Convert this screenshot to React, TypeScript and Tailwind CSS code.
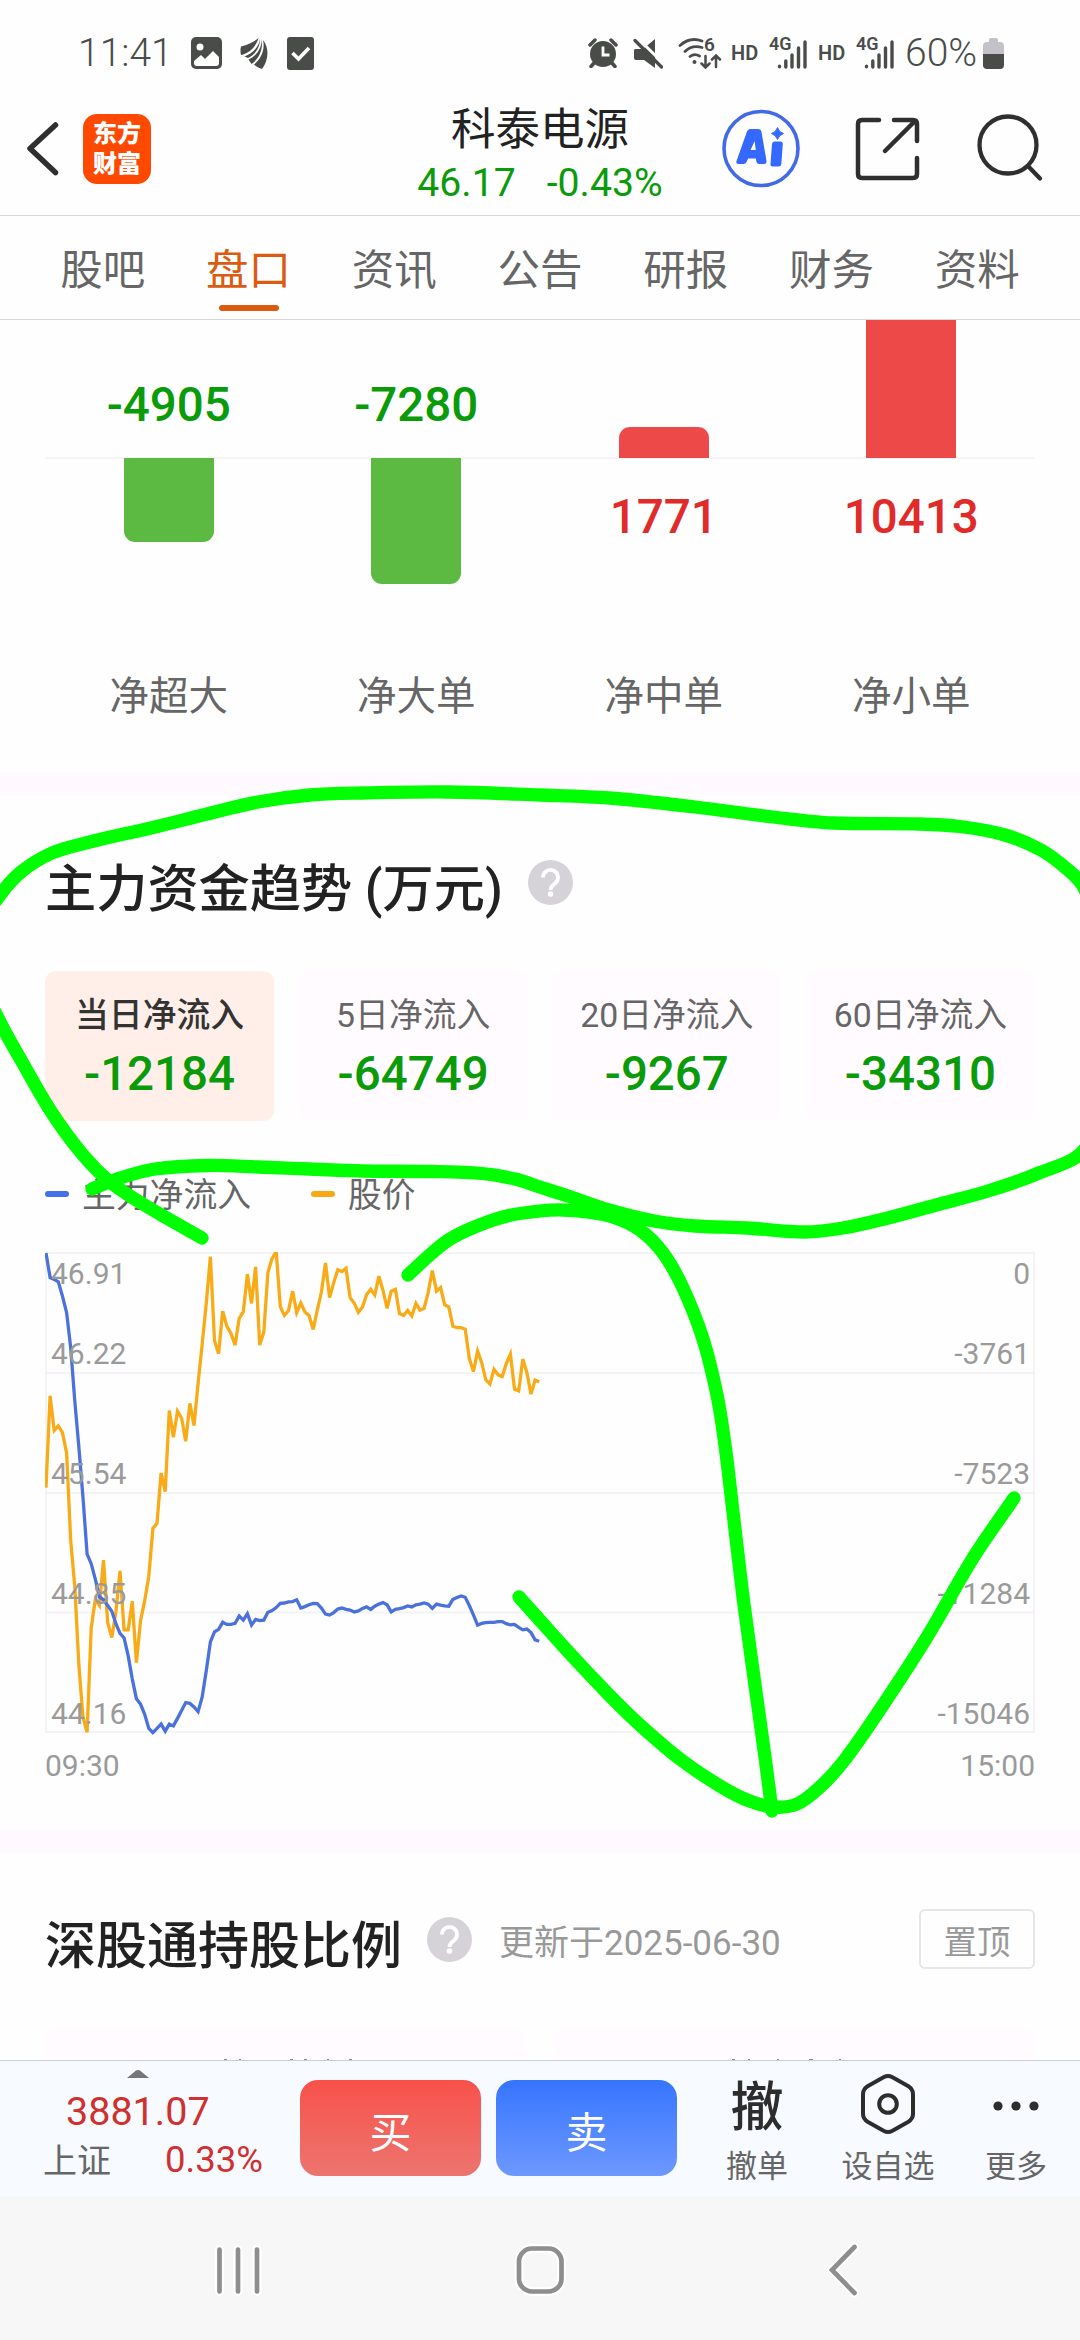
import React from "react";

type Point = [number, number];

const tabs = ["股吧", "盘口", "资讯", "公告", "研报", "财务", "资料"];

const orders = [
  { label: "净超大", value: -4905, height: 84 },
  { label: "净大单", value: -7280, height: 126 },
  { label: "净中单", value: 1771, height: 31 },
  { label: "净小单", value: 10413, height: 138 },
];

const flows = [
  { label: "当日净流入", value: "-12184" },
  { label: "5日净流入", value: "-64749" },
  { label: "20日净流入", value: "-9267" },
  { label: "60日净流入", value: "-34310" },
];

// One sample per trading minute, measured downwards from the chart's origin.
const price = [
  722, 465, 562, 549, 567, 625, 870, 1000, 1220, 1365, 1407, 1115, 1035, 1052, 925, 1100, 1142, 1070, 955, 1120,
  1120, 1040, 1212, 1095, 1040, 970, 836, 822, 681, 733, 506, 581, 508, 527, 592, 486, 548, 430, 320, 205,
  75, 310, 347, 228, 270, 290, 323, 248, 230, 124, 206, 104, 323, 287, 120, 80, 62, 215, 240, 226,
  172, 232, 205, 230, 240, 279, 225, 175, 93, 190, 148, 112, 117, 108, 190, 206, 231, 216, 182, 167,
  183, 130, 170, 220, 172, 167, 235, 240, 226, 241, 206, 225, 220, 175, 114, 172, 162, 210, 216, 270,
  274, 274, 278, 360, 397, 340, 372, 420, 432, 391, 406, 411, 375, 348, 446, 451, 362, 400, 460, 421, 426,
];

const inflow = [
  65, 134, 139, 146, 185, 232, 330, 480, 610, 750, 908, 935, 978, 1028, 1036, 1052, 1068, 1103, 1130, 1143,
  1193, 1258, 1313, 1328, 1356, 1396, 1408, 1396, 1384, 1404, 1384, 1389, 1368, 1346, 1324, 1326, 1336, 1349, 1308, 1234,
  1154, 1126, 1119, 1099, 1105, 1105, 1102, 1081, 1093, 1075, 1107, 1091, 1094, 1093, 1071, 1066, 1058, 1046, 1045, 1042,
  1041, 1036, 1059, 1055, 1050, 1046, 1047, 1059, 1076, 1079, 1072, 1062, 1059, 1063, 1065, 1070, 1067, 1060, 1056, 1063,
  1054, 1048, 1044, 1050, 1070, 1063, 1061, 1058, 1053, 1056, 1050, 1048, 1045, 1048, 1060, 1048, 1051, 1053, 1054, 1035,
  1030, 1025, 1029, 1052, 1078, 1107, 1102, 1100, 1099, 1099, 1097, 1097, 1103, 1106, 1105, 1113, 1120, 1118, 1128, 1148, 1152,
];

const toLine = (values: number[]) =>
  values.map((v, i) => `${(1 + i * 4.11).toFixed(1)},${((v - 65) / 2.8 + 1).toFixed(1)}`).join(" ");

const axis = [
  { left: "46.91", right: "0", y: 32 },
  { left: "46.22", right: "-3761", y: 112 },
  { left: "45.54", right: "-7523", y: 232 },
  { left: "44.85", right: "-11284", y: 352 },
  { left: "44.16", right: "-15046", y: 472 },
];

const loopStroke: Point[] = [
  [202, 1238], [165, 1217], [138, 1201], [110, 1182], [83, 1155], [52, 1113], [21, 1060], [0, 1022], [-18, 980], [-18, 925],
  [0, 895], [21, 872], [52, 853], [90, 842], [155, 827], [207, 814], [258, 802], [310, 795], [362, 793], [448, 792],
  [540, 795], [609, 798], [695, 807], [781, 818], [833, 823], [919, 824], [960, 826.5], [1005, 835], [1041, 850], [1067, 869],
  [1083, 886], [1110, 950], [1120, 1080], [1083, 1151], [1039, 1173], [988, 1191], [936, 1205], [884, 1219], [843, 1228], [805, 1232],
  [747, 1228], [695, 1226], [654, 1221], [609, 1210], [568, 1196], [540, 1187], [515, 1179], [482, 1173.500], [430, 1171.500], [362, 1171],
  [310, 1169], [258, 1167], [207, 1165.500], [155, 1169], [120, 1178], [92, 1189],
];

const fallStroke: Point[] = [
  [408, 1275], [432, 1253], [450, 1239], [477, 1226], [507, 1216], [540, 1211], [563, 1210], [587, 1212], [613, 1217], [640, 1230],
  [663, 1253], [683, 1288], [703, 1339], [717, 1395], [725, 1445], [733, 1512], [743, 1597], [755, 1685], [765, 1757], [772, 1811],
];

const reboundStroke: Point[] = [
  [519, 1597], [537, 1617], [563, 1646], [590, 1675], [615, 1701], [640, 1725], [680, 1759], [720, 1786], [747, 1800], [773, 1807],
  [797, 1804], [820, 1787], [843, 1762], [877, 1714], [927, 1637], [973, 1558], [1014, 1498],
];

// Cubic spline through the pen's points, with tangents weighted by segment length.
const smooth = (p: Point[]) => {
  const length = (i: number) => Math.hypot(p[i + 1][0] - p[i][0], p[i + 1][1] - p[i][1]);
  const tangent = (i: number): Point => {
    const a = Math.max(i - 1, 0);
    const b = Math.min(i + 1, p.length - 1);
    let run = 0;
    for (let k = a; k < b; k++) run += length(k);
    return [(p[b][0] - p[a][0]) / run, (p[b][1] - p[a][1]) / run];
  };
  let d = `M${p[0][0]} ${p[0][1]}`;
  for (let i = 0; i < p.length - 1; i++) {
    const s = length(i) / 3;
    const [ax, ay] = tangent(i);
    const [bx, by] = tangent(i + 1);
    const [nx, ny] = p[i + 1];
    d += `C${p[i][0] + ax * s} ${p[i][1] + ay * s} ${nx - bx * s} ${ny - by * s} ${nx} ${ny}`;
  }
  return d;
};

function Signal() {
  return (
    <div className="relative h-8 w-[38px]">
      <span className="absolute left-0 top-0 text-[18px] font-semibold leading-[14px]">4G</span>
      <svg className="absolute bottom-0 right-0" width="30" height="30" viewBox="0 0 30 30" stroke="currentColor" strokeWidth="3.4" strokeLinecap="round">
        <path d="M2.5 27.2v.6M8.8 22v6M15 16v12M21.5 9v19M28 3v25" />
      </svg>
    </div>
  );
}

function StatusBar() {
  return (
    <div className="flex h-[106px] items-center pl-[78px] pr-[76px] text-[#4a4c4a]">
      <span className="w-[113px] pt-px text-[39px] font-light leading-none">11:41</span>
      <svg width="31" height="32" viewBox="0 0 31 32">
        <rect width="31" height="32" rx="5" fill="currentColor" />
        <circle cx="9" cy="10" r="3.5" fill="#fff" />
        <path d="M3 24l7-6 4 4 8-8 6 6v6q0 3-3 3H6q-3 0-3-3z" fill="#fff" />
      </svg>
      <svg className="ml-[18px]" width="28" height="33" viewBox="0 0 28 33" fill="currentColor">
        <path d="M18.500 1C13 5.500 7 8 1 9.500q-1 4 0 8.500C9 16 16 10 18.500 1z" />
        <path d="M20 1.500c-1 9-8 15.500-15.500 18L8 21C15 17.500 20 11 20 1.500z" />
        <path d="M21.500 2C22 12 16 19 8.500 22.500l3 4.500C19 22 23.500 12 21.500 2z" />
        <path d="M23 3c2.500 10-2.500 19.500-9 24.500 1.500 1.500 4.500 3.500 8 4.500 6-8 8-20 1-29z" />
      </svg>
      <svg className="ml-[19px]" width="27" height="33" viewBox="0 0 27 33">
        <rect width="27" height="33" rx="3" fill="currentColor" />
        <path d="M5.500 16l6 6L22 11" fill="none" stroke="#fff" strokeWidth="3.600" />
      </svg>
      <div className="flex-1" />
      <svg width="30" height="30" viewBox="0 0 30 30" fill="none" stroke="currentColor">
        <circle cx="15" cy="16" r="13" fill="currentColor" stroke="none" />
        <path d="M2 7l5-5M28 7l-5-5" strokeWidth="3.500" strokeLinecap="round" />
        <path d="M6 25l-3 3.500M24 25l3 3.500" strokeWidth="3.500" strokeLinecap="round" />
        <path d="M15 8.500V17h6.500" stroke="#fff" strokeWidth="2.800" />
      </svg>
      <svg className="ml-[15px]" width="30" height="31" viewBox="0 0 30 31">
        <path d="M2 11h8L22 1v29L11 22H3q-2 0-2-2v-7q0-2 1-2z" fill="currentColor" />
        <path d="M3 -1.500L31 26" stroke="#fefefe" strokeWidth="3" />
        <path d="M2 2.500L28.500 29" stroke="currentColor" strokeWidth="3.200" strokeLinecap="round" />
      </svg>
      <div className="relative ml-[15px] h-8 w-[44px]">
        <svg width="44" height="32" viewBox="0 0 44 32" fill="none" stroke="currentColor" strokeWidth="2.800" strokeLinecap="round">
          <path d="M2 8.500Q12-.5 24 4M7 14.500Q14 7.500 24 10.500M12 19.500q4.500-3.500 9.500-.5" />
          <circle cx="16.500" cy="25" r="2" fill="currentColor" stroke="none" />
          <path d="M27.500 19v11M23.500 26.500l4 4 4-4M38 30V19M34 22.500l4-4 4 4" strokeWidth="2.500" />
        </svg>
        <span className="absolute left-[26px] top-0 text-[19px] font-semibold leading-4">6</span>
      </div>
      <span className="ml-[9px] w-[29px] text-[20px] font-semibold leading-none">HD</span>
      <div className="ml-[9px]"><Signal /></div>
      <span className="ml-[11px] w-[29px] text-[20px] font-semibold leading-none">HD</span>
      <div className="ml-[9px]"><Signal /></div>
      <span className="ml-[11px] w-[78px] pt-px text-[39px] font-light leading-none">60%</span>
      <svg width="21" height="31" viewBox="0 0 21 31">
        <path d="M6 4V2q0-2 2-2h5q2 0 2 2v2h2q4 0 4 4v10H0V8q0-4 4-4z" fill="#c4c1c8" />
        <path d="M0 16h21v11q0 4-4 4H4q-4 0-4-4z" fill="currentColor" />
      </svg>
    </div>
  );
}

function Header() {
  return (
    <header className="flex h-[110px] items-start border-b border-[#d6d6d6] text-[#2f2f2f]">
      <svg className="ml-[27px] mt-[15px]" width="32" height="56" viewBox="0 0 32 56" fill="none" stroke="currentColor" strokeWidth="5.500" strokeLinecap="round" strokeLinejoin="round">
        <path d="M28.500 4L3 27.500 28.500 51.500" />
      </svg>
      <div className="ml-6 mt-2 flex h-[70px] w-[68px] flex-col items-center justify-center rounded-[14px] bg-[#ff4800] text-[24px] font-black leading-[30px] text-white">
        <span>东方</span>
        <span>财富</span>
      </div>
      <div className="ml-[239px] flex w-[300px] flex-col items-center">
        <h1 className="pt-px text-[44.500px] leading-[46px] text-[#222]">科泰电源</h1>
        <div className="mt-[10px] flex gap-[31px] text-[39.200px] leading-10 text-[#0a9b0a]">
          <span>46.17</span>
          <span>-0.43%</span>
        </div>
      </div>
      <div className="relative ml-[32px] mt-[3px] size-[79px]">
        <svg width="79" height="80" viewBox="0 0 79 80">
          <circle cx="39" cy="39.500" r="37" fill="none" stroke="#4169e8" strokeWidth="3.600" />
          <path d="M55.500 18.500q1.500 5 6 6-4.500 1.500-6 6-1.500-4.500-6-6 4.500-1 6-6z" fill="#3568ff" stroke="#3568ff" strokeLinejoin="round" />
          <path fillRule="evenodd" d="M25 22.500q1-2.500 3-2.500h8q3 0 3.500 3l5 29q.4 3-2.500 3h-5q-2 0-2.500-2l-.7-3.500h-7.600L24.500 53q-.7 2-3 2h-5q-3 0-2-3zM32.600 32l-4 9h5.200z" fill="#3568ff" />
          <path d="M50 35q.3-2.500 2.500-2.500h6q2.500 0 2.300 2.500l-1.500 20q-.3 2.500-2.500 2.500h-6q-2.500 0-2.300-2.500z" fill="#3568ff" />
        </svg>
      </div>
      <svg className="ml-[54px] mt-[10px]" width="65" height="66" viewBox="0 0 65 66" fill="none" stroke="currentColor" strokeWidth="4.500" strokeLinecap="round" strokeLinejoin="round">
        <path d="M24 4H7Q3 4 3 8v50q0 4 4 4h51q4 0 4-4V42M39 4h19q4 0 4 4v17M60 5L30 35" />
      </svg>
      <svg className="ml-[57px] mt-[7px]" width="68" height="70" viewBox="0 0 68 70" fill="none" stroke="currentColor" strokeWidth="4.300" strokeLinecap="round">
        <circle cx="31" cy="32" r="28.500" />
        <path d="M51 53l12 12.500" />
      </svg>
    </header>
  );
}

function Tabs() {
  return (
    <nav className="flex h-[104px] border-b border-[#d6d6d6] px-[30px] text-[42.500px] text-[#666]">
      {tabs.map((tab, i) => (
        <div key={tab} className={i === 1 ? "flex flex-1 flex-col items-center pt-[30px] text-[#db5c10]" : "flex flex-1 flex-col items-center pt-[30px]"}>
          <span className="leading-[50px]">{tab}</span>
          {i === 1 && <span className="mt-[9px] h-[6px] w-[60px] rounded-full bg-[#db5c10]" />}
        </div>
      ))}
    </nav>
  );
}

function OrderBars() {
  return (
    <section className="h-[452px] px-[45px]">
      <div className="grid h-[390px] grid-cols-4">
        {orders.map(({ label, value, height }) => (
          <div key={label} className="flex flex-col items-center">
            <div className="flex h-[139px] w-full flex-col items-center justify-end border-b-2 border-[#f4f4f4]">
              {value < 0 ? (
                <span className="mb-[27px] text-[47.500px] font-medium leading-[50px] text-[#0a9b0a]">{value}</span>
              ) : (
                <div className={value === 1771 ? "-mb-px w-[90px] rounded-t-[11px] bg-[#ee4949]" : "-mb-px w-[90px] bg-[#ee4949]"} style={{ height }} />
              )}
            </div>
            <div className="flex h-[200px] w-full flex-col items-center">
              {value < 0 ? (
                <div className="-mt-px w-[90px] rounded-b-[11px] bg-[#5cb942]" style={{ height }} />
              ) : (
                <span className="mt-[33px] text-[47.500px] font-medium leading-[50px] text-[#e12a2a]">{value}</span>
              )}
            </div>
            <span className="mt-[13px] text-[39.500px] leading-[50px] text-[#666]">{label}</span>
          </div>
        ))}
      </div>
    </section>
  );
}

function Help() {
  return (
    <svg width="45" height="45" viewBox="0 0 45 45" fill="none">
      <circle cx="22.500" cy="22.500" r="22.500" fill="#d5d3d7" />
      <path d="M15 17.500a7.500 7.500 0 1 1 12.500 5.500c-3 2.500-5 3.500-5 7" stroke="#fff" strokeWidth="3.800" />
      <circle cx="22.500" cy="34" r="2.800" fill="#fff" />
    </svg>
  );
}

function TrendChart() {
  return (
    <svg className="mt-[38px] block" width="990" height="546" viewBox="0 0 990 546">
      <g fill="none" stroke="#f4f2f4" strokeWidth="2">
        <rect x="1" y="1" width="988" height="479" />
        <path d="M1 121h988M1 241h988M1 360.500h988" />
      </g>
      <g fill="none" strokeWidth="3.300" strokeLinejoin="miter">
        <polyline points={toLine(price)} stroke="#f8ab16" />
        <polyline points={toLine(inflow)} stroke="#4b72dc" />
      </g>
      <g fontSize="30" fill="#9a9a9a">
        {axis.map(({ left, right, y }) => (
          <React.Fragment key={left}>
            <text x="6" y={y}>{left}</text>
            <text x="985" y={y} textAnchor="end">{right}</text>
          </React.Fragment>
        ))}
        <text x="0" y="524">09:30</text>
        <text x="990" y="524" textAnchor="end">15:00</text>
      </g>
    </svg>
  );
}

function Trend() {
  return (
    <section className="h-[1033px] px-[45px] pt-[61px]">
      <div className="flex h-[60px] items-center">
        <h2 className="whitespace-nowrap pt-[6px] text-[51.200px] font-medium leading-[60px] text-[#222]">主力资金趋势 (万元)</h2>
        <div className="-mt-[10px] ml-[25px]"><Help /></div>
      </div>
      <div className="mt-[54px] grid h-[150px] grid-cols-4 gap-[24.500px]">
        {flows.map(({ label, value }, i) => (
          <div key={label} className={i === 0 ? "flex flex-col items-center rounded-[11px] bg-[#ffefe8] pt-[25px]" : "flex flex-col items-center rounded-[11px] bg-[#fffbff] pt-[25px]"}>
            <span className={i === 0 ? "text-[33.800px] font-medium leading-[40px] text-[#333]" : "text-[33.800px] leading-[40px] text-[#666]"}>{label}</span>
            <span className="mt-[13px] text-[47.500px] font-medium leading-[50px] text-[#0a9b0a]">{value}</span>
          </div>
        ))}
      </div>
      <div className="mt-[53px] flex h-10 items-center text-[33.800px] leading-10 text-[#666]">
        <span className="h-[6px] w-6 rounded-full bg-[#4670e8]" />
        <span className="ml-[13px] w-[229px] pt-[3px]">主力净流入</span>
        <span className="h-[6px] w-6 rounded-full bg-[#f9a812]" />
        <span className="ml-[13px] pt-[3px]">股价</span>
      </div>
      <TrendChart />
    </section>
  );
}

function Holdings() {
  return (
    <section className="h-[207px] overflow-hidden px-[45px] pt-[56px]">
      <div className="flex h-[60px] items-center">
        <h2 className="pt-[16px] text-[51px] font-medium leading-[60px] text-[#222]">深股通持股比例</h2>
        <div className="ml-[25px]"><Help /></div>
        <span className="ml-[27px] mt-[9px] text-[35px] leading-10 text-[#999]">更新于2025-06-30</span>
        <span className="ml-auto flex h-[60px] w-[116px] items-center justify-center rounded-[6px] border-2 border-[#e6e6e6] pt-[7px] text-[33.500px] leading-none text-[#999]">置顶</span>
      </div>
      <div className="mt-[59px] grid grid-cols-2 gap-[28px]">
        <div className="h-12 rounded-t-[11px] bg-[#fffbff] pl-[178px] pt-[31px]">
          <svg className="block" width="130" height="2" stroke="#8a8a8a" strokeWidth="2"><path d="M1 1h3M16 1h2M67 1h3M81 1h3M104 1h2M126 1h3" /></svg>
        </div>
        <div className="h-12 rounded-t-[11px] bg-[#fffbff] pl-[177px] pt-[31px]">
          <svg className="block" width="120" height="2" stroke="#8a8a8a" strokeWidth="2"><path d="M1 1h3M17 1h2M46 1h2M78 1h4M108 1h2" /></svg>
        </div>
      </div>
    </section>
  );
}

function ActionBar() {
  return (
    <footer className="flex h-[136px] border-t border-[#cdced8] bg-[#f7faff] text-[#666]">
      <div className="flex w-[300px] flex-col pt-[9px]">
        <svg className="ml-[127px]" width="22" height="8" viewBox="0 0 22 8"><path d="M0 8L9 .5q2-1 4 0L22 8z" fill="#75767c" /></svg>
        <span className="ml-[66px] mt-[14px] text-[39.500px] leading-10 text-[#cf3030]">3881.07</span>
        <div className="mt-[8px] flex h-10 items-center pl-[43px] text-[34px] leading-10">
          <span className="pt-px">上证</span>
          <span className="ml-auto mr-[37px] text-[36.500px] text-[#cf3030]">0.33%</span>
        </div>
      </div>
      <button className="mt-[19px] h-24 w-[181px] rounded-[18px] bg-gradient-to-b from-[#f8504a] to-[#ec746e] pt-[12px] text-[42px] leading-none text-white">买</button>
      <button className="ml-[15px] mt-[19px] h-24 w-[181px] rounded-[18px] bg-gradient-to-b from-[#3574ff] to-[#6d98ff] pt-[12px] text-[42px] leading-none text-white">卖</button>
      <div className="ml-[20px] flex w-[120px] flex-col items-center">
        <span className="mt-[21px] h-[65px] text-[53px] font-medium leading-[53px] text-[#2d2d2d]">撤</span>
        <span className="text-[31px] leading-10">撤单</span>
      </div>
      <div className="ml-[10px] flex w-[122px] flex-col items-center">
        <svg className="mb-[12px] mt-[12px]" width="54" height="62" viewBox="0 0 54 62" fill="none" stroke="#2d2d2d" strokeWidth="4" strokeLinejoin="round">
          <path d="M23 4q4-2 8 0l16 9q5 3 5 8v20q0 5-5 8l-16 9q-4 2-8 0L7 49q-5-3-5-8V21q0-5 5-8z" />
          <circle cx="27" cy="31" r="8.800" />
        </svg>
        <span className="text-[31px] leading-10">设自选</span>
      </div>
      <div className="ml-[14px] flex w-[106px] flex-col items-center">
        <svg className="mb-[39px] mt-[40px] block" width="46" height="10" fill="#2d2d2d"><circle cx="5" cy="5" r="4.600" /><circle cx="23" cy="5" r="4.600" /><circle cx="41" cy="5" r="4.600" /></svg>
        <span className="-mt-[3px] text-[31px] leading-10">更多</span>
      </div>
    </footer>
  );
}

function SystemNav() {
  return (
    <div className="flex h-[144px] items-start bg-[#f7f7f7] pt-[46px]">
      <svg className="block w-full" height="56" viewBox="0 0 1080 56" fill="none" strokeLinecap="round">
        {["#ffffff", "#8d8e8d"].map((color, i) => (
          <g key={color} stroke={color} strokeWidth={i === 0 ? 9 : 4.7}>
            <path d="M219.500 7.500v42M238 7.500v42M257 7.500v42M854.500 5L832 28l22.500 23" />
            <rect x="519" y="6.500" width="42.500" height="43" rx="13" />
          </g>
        ))}
      </svg>
    </div>
  );
}

export default function App() {
  return (
    <div className="relative h-[2340px] w-[1080px] overflow-hidden bg-[#fefefe] font-['Roboto','Noto_Sans_CJK_SC',sans-serif]">
      <StatusBar />
      <Header />
      <Tabs />
      <OrderBars />
      <div className="h-6 bg-[#fffaff]" />
      <Trend />
      <div className="h-6 bg-[#fffaff]" />
      <Holdings />
      <ActionBar />
      <SystemNav />
      <svg className="pointer-events-none absolute inset-0" width="1080" height="2340" fill="none" stroke="#00ff00" strokeWidth="13.300" strokeLinecap="round" strokeLinejoin="round">
        <path d={smooth(loopStroke)} />
        <path d={smooth(fallStroke)} />
        <path d={smooth(reboundStroke)} />
      </svg>
    </div>
  );
}
